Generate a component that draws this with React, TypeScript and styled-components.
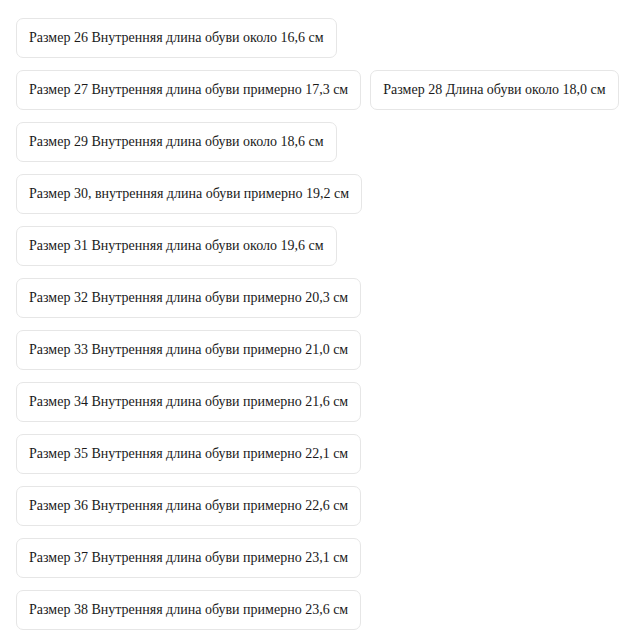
import React from "react";
import styled, { createGlobalStyle } from "styled-components";

const Global = createGlobalStyle`
  html, body { margin: 0; padding: 0; background: #ffffff; }
  body { font-family: "Times New Roman", "Liberation Serif", Times, serif; color: #1a1a1a; }
`;

const List = styled.div`
  display: flex;
  flex-wrap: wrap;
  align-items: flex-start;
  gap: 12px 9px;
  padding: 18px 8px 18px 16px;
`;

const Option = styled.button`
  font-family: "Times New Roman", "Liberation Serif", Times, serif;
  font-size: 14px;
  line-height: 18px;
  color: #1a1a1a;
  background: #ffffff;
  border: 1px solid #e6e6e6;
  border-radius: 7px;
  padding: 10px 12px;
  height: 40px;
  white-space: nowrap;
  cursor: pointer;
  text-align: left;
`;

const sizes = [
  "Размер 26 Внутренняя длина обуви около 16,6 см",
  "Размер 27 Внутренняя длина обуви примерно 17,3 см",
  "Размер 28 Длина обуви около 18,0 см",
  "Размер 29 Внутренняя длина обуви около 18,6 см",
  "Размер 30, внутренняя длина обуви примерно 19,2 см",
  "Размер 31 Внутренняя длина обуви около 19,6 см",
  "Размер 32 Внутренняя длина обуви примерно 20,3 см",
  "Размер 33 Внутренняя длина обуви примерно 21,0 см",
  "Размер 34 Внутренняя длина обуви примерно 21,6 см",
  "Размер 35 Внутренняя длина обуви примерно 22,1 см",
  "Размер 36 Внутренняя длина обуви примерно 22,6 см",
  "Размер 37 Внутренняя длина обуви примерно 23,1 см",
  "Размер 38 Внутренняя длина обуви примерно 23,6 см",
];

export default function App() {
  return (
    <>
      <Global />
      <List>
        {sizes.map((s) => (
          <Option key={s} type="button">
            {s}
          </Option>
        ))}
      </List>
    </>
  );
}
